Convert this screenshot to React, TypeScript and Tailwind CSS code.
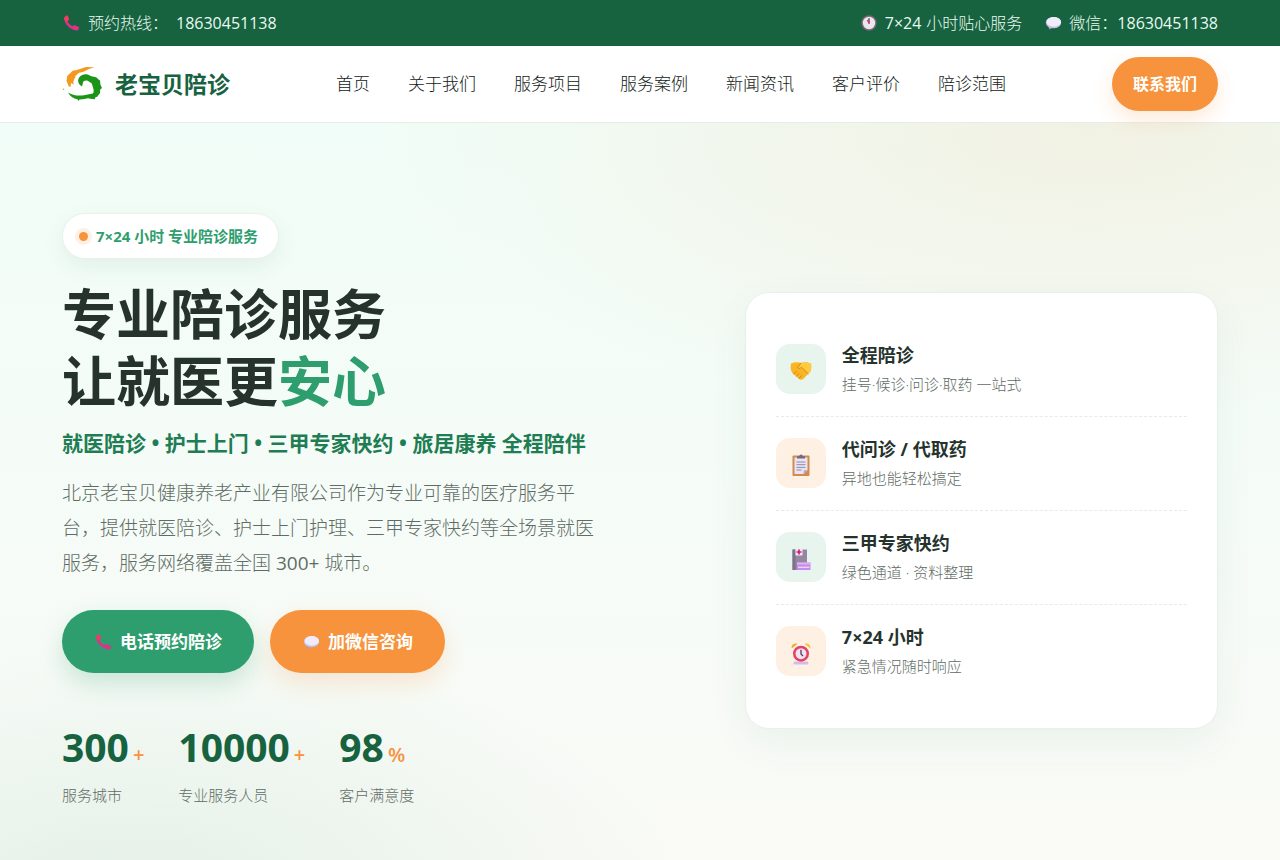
import type { ReactNode } from 'react'

interface IconProps {
  className?: string
}

function PhoneIcon({ className }: IconProps) {
  return (
    <svg viewBox="0 0 18 18" className={className} aria-hidden="true">
      <path
        d="M2.700 3 4.800 1.600c.5-.2.9 0 1.100.5l1 2.900c.1.4 0 .8-.3 1L5.500 7.200c.9 2.100 2.600 3.900 4.800 5l1.500-.9c.3-.2.7-.2 1.100 0l3.800 1.800c.5.2.7.7.4 1.200l-.9 1.500c-.4.6-1 .8-1.700.7C7.900 15.700 2.500 10 2.100 4.300c0-.5.2-1 .6-1.300Z"
        fill="#e0308a"
      />
      <path d="M2.700 3 4.800 1.600c.5-.2.9 0 1.100.5l1 2.900c.1.4 0 .8-.3 1L5.500 7.200 2.500 6.500C2 5 2 3.700 2.700 3Z" fill="#e83f63" />
    </svg>
  )
}

function BubbleIcon({ className }: IconProps) {
  return (
    <svg viewBox="0 0 18 18" className={className} aria-hidden="true">
      <path d="M4 10.500 5.200 15.600 10 13Z" fill="#a99bd0" />
      <ellipse cx="9.500" cy="8.600" rx="7.700" ry="5.700" fill="#c9bde4" />
      <ellipse cx="9.800" cy="7.900" rx="7.200" ry="4.900" fill="#f0ecf9" />
    </svg>
  )
}

function ClockIcon({ className }: IconProps) {
  return (
    <svg viewBox="0 0 18 18" className={className} aria-hidden="true">
      <circle cx="9" cy="9" r="7.700" fill="#7b6878" />
      <circle cx="9" cy="9" r="6.200" fill="#ece6ee" />
      <path d="M9 9V4.200" stroke="#4d3c50" strokeWidth="1.300" />
      <path d="M9 9 7.300 6" stroke="#d93668" strokeWidth="1.300" />
      <circle cx="9" cy="9" r=".9" fill="#d93668" />
    </svg>
  )
}

function HandshakeIcon({ className }: IconProps) {
  return (
    <svg viewBox="0 0 24 24" className={className} aria-hidden="true">
      <path d="M2 4.500 7 3l5 1 5-1 5 1.500c.7 3 .4 6-.8 8.500l-2.400 2.300-4.300 4.400c-1.200 1.200-3 1.300-4.300.3L3.700 14.500C1.500 11.700 1.200 8 2 4.500Z" fill="#f8b526" />
      <path d="M2 4.500 7 3l5 1-3 5.500 4-.8 6 5.600 2-1.300c1.200-2.500 1.500-5.500.8-8.500L17 3l-5 1Z" fill="#ffcb3e" />
      <path d="M12 4 8.500 8.600c1 1.400 2.500.9 4-.4l6.700 6.600M5 15l2.300-2.500M7.500 17.300l2.400-2.800M10.200 19.400l2-2.600" fill="none" stroke="#dd8518" strokeWidth="1" strokeLinecap="round" />
    </svg>
  )
}

function ClipboardIcon({ className }: IconProps) {
  return (
    <svg viewBox="0 0 24 24" className={className} aria-hidden="true">
      <rect x="3.500" y="2.500" width="17" height="20.500" rx="1" fill="#d38a4c" />
      <path d="M5.500 4.500h13v12.800L14.500 21h-9Z" fill="#e9e4f4" />
      <path d="M18.500 17.300 14.500 21l.3-3.700Z" fill="#b3a7c7" />
      <path d="M8 5.500V3.300h2.300a1.700 1.700 0 0 1 3.400 0H16v2.200Z" fill="#75677f" />
      <path d="M7.500 9h9M7.500 11.700h9M7.500 14.400h9M7.500 17h5" stroke="#9289a5" strokeWidth="1" />
    </svg>
  )
}

function HospitalIcon({ className }: IconProps) {
  return (
    <svg viewBox="0 0 24 24" className={className} aria-hidden="true">
      <path d="M3.500 2.500h14.500V23H3.500Z" fill="#9487a0" />
      <path d="M3.500 2.500h3V23h-3Z" fill="#7d718b" />
      <path d="M6.500 1.500h7v7h-7Z" fill="#f7e3f1" />
      <path d="M10 2.500v5M7.500 5h5" stroke="#c52276" strokeWidth="1.700" />
      <path d="M8 15.500h13.500V23H8Z" fill="#c58be8" />
      <path d="M8 15.500h13.500v2H8Z" fill="#ddb5f5" />
      <path d="M9 20.300h11.500" stroke="#e9d1fa" strokeWidth="1.500" />
    </svg>
  )
}

function AlarmIcon({ className }: IconProps) {
  return (
    <svg viewBox="0 0 24 24" className={className} aria-hidden="true">
      <path d="M2.700 7.500C2 4 5 1.500 8.500 2.800Z" fill="#efa92c" />
      <path d="M21.300 7.500C22 4 19 1.500 15.500 2.800Z" fill="#fbc13a" />
      <rect x="4.500" y="20.500" width="15" height="3" rx="1.500" fill="#d6b9ea" />
      <circle cx="12" cy="12.700" r="8" fill="#df4464" />
      <circle cx="12" cy="12.700" r="5.500" fill="#f3e2f2" />
      <path d="M12 8.800v4.200l2 2" fill="none" stroke="#5b3a5d" strokeWidth="1.300" />
    </svg>
  )
}

function Logo() {
  return (
    <svg viewBox="0 0 40 40" className="w-10 h-10" aria-hidden="true">
      <path d="M32.500 3.200 24 3 14 6.200l-3 .3L5.200 12 4.500 17l2.300 5.500L8.500 23l.5-4 2.500 1.500c-.5-3 .5-5.800 2.500-8l-1.500.3 4.500-4 4-.8 6-3Z" fill="#f39a1e" />
      <circle cx="1.500" cy="25.300" r=".8" fill="#f39a1e" />
      <path d="M20 22.500c-4-2.500-5-6.500-2.500-9.500 3-3.500 8-3.500 11-1 3 1 6 .5 8 3.500l1.500 1 .5 4.500 1.500 3-1.800 1.500-.2 3.500-3 4h-1.500l-1 2.500c-1.500-1-4-.8-6-1.300l3-2.200c2-2.500 3-5 1.500-8.500l-1.200-4-4-2.700c-3-.8-5 .7-5 2.700Z" fill="#1c9418" />
      <path d="M6 28.500c5 3.500 13 4 21 1.700l5-1 2.500 3-3 2.800c-4-1.500-8-.2-11 .3l-3 .2-1 1.500-.7-1.500C11 34.500 8 32 6 28.500Z" fill="#1c9418" />
    </svg>
  )
}

const navItems = ['首页', '关于我们', '服务项目', '服务案例', '新闻资讯', '客户评价', '陪诊范围']

const services: { title: string; desc: string; icon: ReactNode; warm: boolean }[] = [
  { title: '全程陪诊', desc: '挂号·候诊·问诊·取药 一站式', icon: <HandshakeIcon className="w-6 h-6" />, warm: false },
  { title: '代问诊 / 代取药', desc: '异地也能轻松搞定', icon: <ClipboardIcon className="w-6 h-6" />, warm: true },
  { title: '三甲专家快约', desc: '绿色通道 · 资料整理', icon: <HospitalIcon className="w-6 h-6" />, warm: false },
  { title: '7×24 小时', desc: '紧急情况随时响应', icon: <AlarmIcon className="w-6 h-6" />, warm: true },
]

const stats = [
  { value: '300', unit: '+', label: '服务城市' },
  { value: '10000', unit: '+', label: '专业服务人员' },
  { value: '98', unit: '%', label: '客户满意度' },
]

function TopBar() {
  return (
    <div className="bg-[#17623f] text-[#e9fbf2]">
      <div className="max-w-[1156px] mx-auto h-[46px] flex items-center justify-between text-base">
        <div className="flex items-center gap-2">
          <PhoneIcon className="w-[18px] h-[18px]" />
          <span className="font-light">预约热线：</span>
          <a href="tel:18630451138">18630451138</a>
        </div>
        <div className="flex items-center gap-[22px]">
          <span className="flex items-center gap-[7px]">
            <ClockIcon className="w-[18px] h-[18px]" />
            <span>7×24</span>
            <span className="-ml-[2px] font-light">小时贴心服务</span>
          </span>
          <span className="flex items-center gap-[7px]">
            <BubbleIcon className="w-[18px] h-[18px]" />
            <span className="flex">
              <span className="font-light">微信：</span>
              <span>18630451138</span>
            </span>
          </span>
        </div>
      </div>
    </div>
  )
}

function Header() {
  return (
    <header className="relative bg-white border-b border-[#e8ece9]">
      <div className="max-w-[1156px] mx-auto h-[76px] flex items-center justify-between">
        <a href="#home" className="flex items-center gap-[13px]">
          <Logo />
          <span className="text-[23px] font-bold text-[#17623f]">老宝贝陪诊</span>
        </a>
        <nav className="flex gap-[38px] text-[17px] font-light text-[#111a16]">
          {navItems.map((item) => (
            <a key={item} href={`#${item}`}>{item}</a>
          ))}
        </nav>
        <a
          href="#contact"
          className="h-[54px] px-[21px] flex items-center rounded-full bg-[#f6933c] text-white text-base font-bold shadow-[0_8px_20px_rgba(246,147,60,0.2)]"
        >
          联系我们
        </a>
      </div>
    </header>
  )
}

function HeroText() {
  return (
    <div>
      <div className="inline-flex items-center gap-2 h-[46px] pl-4 pr-5 rounded-full bg-white border border-[#e9f1ec] shadow-[0_8px_22px_rgba(23,98,63,0.08)] text-[15px] font-bold text-[#2f9e6e]">
        <span className="w-[9px] h-[9px] rounded-full bg-[#f6933c] shadow-[0_0_0_4px_rgba(246,147,60,0.14)]" />
        7×24 小时 专业陪诊服务
      </div>
      <h1 className="mt-[22px] text-[54px] leading-[67px] font-bold text-[#26332d]">
        专业陪诊服务
        <br />
        让就医更<span className="text-[#2f9e6e]">安心</span>
      </h1>
      <p className="mt-[11px] text-[21px] leading-[34px] font-bold text-[#1f7d54]">
        就医陪诊 • 护士上门 • 三甲专家快约 • 旅居康养 全程陪伴
      </p>
      <p className="mt-4 max-w-[540px] text-[19px] leading-[35px] font-['Open_Sans','Noto_Sans_CJK_SC_Light','Noto_Sans_CJK_SC',sans-serif] text-[#5f6c65]">
        北京老宝贝健康养老产业有限公司作为专业可靠的医疗服务平台，提供就医陪诊、护士上门护理、三甲专家快约等全场景就医服务，服务网络覆盖全国 300+ 城市。
      </p>
      <div className="mt-[29px] flex gap-4 text-[17px] font-bold text-white">
        <button className="h-[63px] px-8 flex items-center gap-2 rounded-full bg-[#2f9e6e] shadow-[0_10px_24px_rgba(47,158,110,0.22)]">
          <PhoneIcon className="w-[18px] h-[18px]" />
          电话预约陪诊
        </button>
        <button className="h-[63px] px-8 flex items-center gap-2 rounded-full bg-[#f6933c] shadow-[0_10px_24px_rgba(246,147,60,0.2)]">
          <BubbleIcon className="w-[18px] h-[18px]" />
          加微信咨询
        </button>
      </div>
      <div className="mt-[46px] flex gap-[34px]">
        {stats.map((stat) => (
          <div key={stat.label}>
            <div className="flex items-baseline gap-1 leading-[56px]">
              <span className="text-[39px] font-bold text-[#17623f]">{stat.value}</span>
              <span className="text-xl font-semibold text-[#f6933c]">{stat.unit}</span>
            </div>
            <div className="mt-[7px] text-[15px] leading-[26px] font-light text-[#5f6c65]">{stat.label}</div>
          </div>
        ))}
      </div>
    </div>
  )
}

function ServiceCard() {
  return (
    <ul className="p-[30px] rounded-3xl bg-white border border-[#e9efeb] shadow-[0_14px_40px_rgba(23,98,63,0.06)]">
      {services.map((service) => (
        <li
          key={service.title}
          className="flex items-center gap-4 pt-[21px] pb-[22px] border-b border-dashed border-[#e6ebe8] last:border-b-0"
        >
          <div
            className={`w-[50px] h-[50px] shrink-0 rounded-[14px] flex items-center justify-center pt-1 ${
              service.warm ? 'bg-[#fef0e3]' : 'bg-[#e8f5ef]'
            }`}
          >
            {service.icon}
          </div>
          <div className="h-[50px] flex flex-col justify-center">
            <h3 className="text-lg leading-[30px] font-bold text-[#26332d]">{service.title}</h3>
            <p className="text-[15px] leading-7 font-light text-[#5f6c65]">{service.desc}</p>
          </div>
        </li>
      ))}
    </ul>
  )
}

export default function App() {
  return (
    <div className="min-h-screen font-['Open_Sans','Noto_Sans_CJK_SC',sans-serif]">
      <TopBar />
      <Header />
      <main className="py-[90px] bg-[radial-gradient(ellipse_720px_300px_at_85%_0%,rgba(246,147,60,0.11),transparent),radial-gradient(ellipse_560px_260px_at_10%_100%,rgba(47,158,110,0.11),transparent),linear-gradient(180deg,#f1fdf8_0%,#fafaf6_100%)]">
        <div className="max-w-[1156px] mx-auto grid grid-cols-[4fr_3fr] gap-[52px] items-center">
          <HeroText />
          <ServiceCard />
        </div>
      </main>
    </div>
  )
}
